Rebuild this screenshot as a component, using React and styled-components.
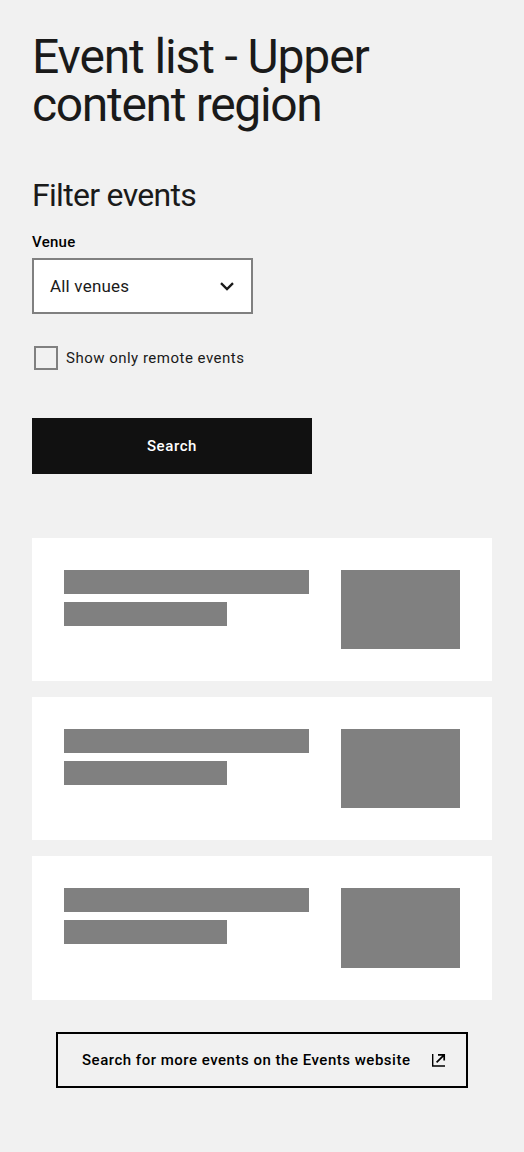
import React from "react";
import styled, { createGlobalStyle } from "styled-components";

const family = 'Roboto, "Liberation Sans", Arial, sans-serif';

const Global = createGlobalStyle`
  * { box-sizing: border-box; }
  body { margin: 0; background: #f1f1f1; color: #1a1a1a; font-family: ${family}; }
  h1, h2 { margin: 0; font-weight: 400; }
  button { font-family: inherit; }
`;
const Page = styled.main`
  min-height: 1152px;
  padding: 33px 32px 64px;
  background: #f1f1f1;
`;
const Text = styled.span`
  display: block;
  width: max-content;
  white-space: nowrap;
  letter-spacing: ${(p) => p.$track || 0}px;
`;
const Title = styled.h1`
  font-size: 48px;
  line-height: 48px;
`;
const Heading = styled.h2`
  margin-top: 46px;
  font-size: 32px;
  line-height: 40px;
`;
const Label = styled.label`
  display: block;
  margin-top: 15px;
  font-size: 15px;
  font-weight: 500;
  line-height: 24px;
  color: #000;
`;
const Select = styled.button`
  display: flex;
  align-items: center;
  justify-content: space-between;
  width: 221px;
  height: 56px;
  margin-top: 4px;
  padding: 0 16px;
  border: 2px solid #808080;
  border-radius: 0;
  background: #fff;
  color: #1a1a1a;
  font-size: 17px;
  line-height: 26px;
`;
const CheckRow = styled.div`
  display: flex;
  align-items: center;
  gap: 8px;
  height: 24px;
  margin: 32px 0 0 2px;
  font-size: 15px;
`;
const CheckBox = styled.span`
  width: 24px;
  height: 24px;
  border: 2px solid #808080;
`;
const Submit = styled.button`
  display: flex;
  align-items: center;
  justify-content: center;
  width: 280px;
  height: 56px;
  margin-top: 48px;
  border: 0;
  background: #111;
  color: #fff;
  font-size: 15px;
  font-weight: 500;
  line-height: 24px;
`;
const Results = styled.div`
  display: flex;
  flex-direction: column;
  gap: 16px;
  margin-top: 64px;
`;
const Card = styled.article`
  display: flex;
  justify-content: space-between;
  height: 143.2px;
  padding: 32px;
  background: #fff;
`;
const Lines = styled.div`
  display: flex;
  flex-direction: column;
  gap: 8px;
  width: 245px;
`;
const Bar = styled.div`
  width: ${(p) => p.$width}px;
  height: 24px;
  background: #808080;
`;
const Thumb = styled.div`
  width: 119px;
  height: 79.2px;
  background: #808080;
`;
const More = styled.a`
  display: flex;
  align-items: center;
  justify-content: space-between;
  width: 412px;
  height: 56px;
  margin: 32px auto 0;
  padding: 0 20px 0 24px;
  border: 2px solid #000;
  color: #000;
  font-size: 15px;
  font-weight: 500;
  line-height: 24px;
`;

export default function App() {
  return (
    <Page>
      <Global />
      <Title>
        <Text $track={-1.12}>Event list - Upper</Text>
        <Text $track={-1.33}>content region</Text>
      </Title>
      <Heading><Text $track={-0.7}>Filter events</Text></Heading>
      <Label><Text $track={0.28}>Venue</Text></Label>
      <Select>
        <Text $track={0.2}>All venues</Text>
        <svg width="16" height="10" viewBox="0 0 16 10" fill="none" stroke="#1a1a1a" strokeWidth="2.3"><path d="M2 2.1l6 6 6-6" /></svg>
      </Select>
      <CheckRow><CheckBox /><Text $track={0.49}>Show only remote events</Text></CheckRow>
      <Submit><Text $track={0.6}>Search</Text></Submit>
      <Results>
        {[0, 1, 2].map((i) => (
          <Card key={i}>
            <Lines><Bar $width={245} /><Bar $width={163} /></Lines>
            <Thumb />
          </Card>
        ))}
      </Results>
      <More>
        <Text $track={0.51}>Search for more events on the Events website</Text>
        <svg width="14" height="14" viewBox="0 0 14 14" fill="none" stroke="#000">
          <path d="M.7 1v12H13" strokeWidth="1.4" />
          <path d="M4.6 9.4l7.6-7.6M6 1.9h6.2V7.4" strokeWidth="1.7" />
        </svg>
      </More>
    </Page>
  );
}
